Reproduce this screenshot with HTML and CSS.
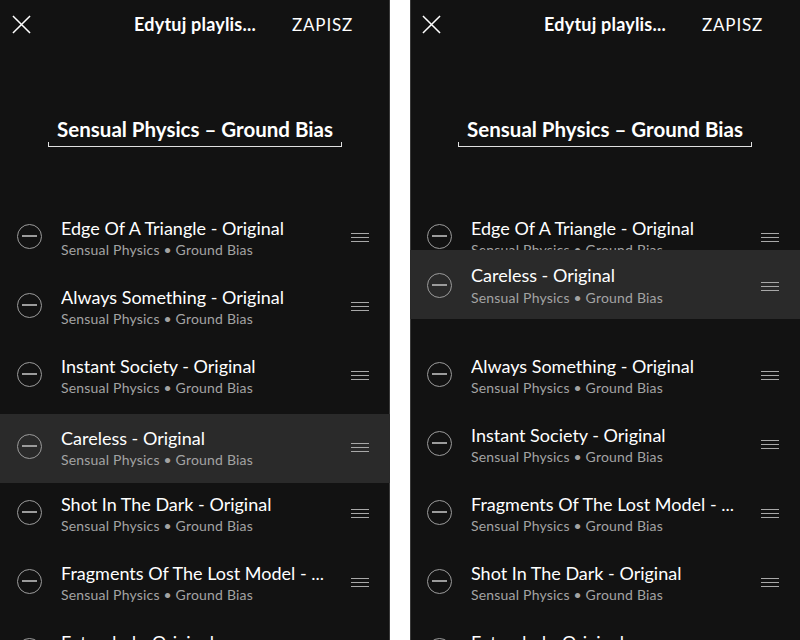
FILE: index.html
```html
<!DOCTYPE html>
<html lang="pl">
<head>
<meta charset="utf-8">
<title>Edytuj playlistę</title>
<link rel="stylesheet" href="styles.css">
</head>
<body>
<div class="screens">
  <section class="phone">
    <header class="bar">
      <span class="close"><svg viewBox="0 0 20 20" width="20" height="20"><path d="M1 1 L19 19 M19 1 L1 19" stroke="#fff" stroke-width="1.6" fill="none"/></svg></span>
      <span class="bar-title">Edytuj playlis...</span>
      <span class="save">ZAPISZ</span>
    </header>
    <div class="name">
      <div class="name-text">Sensual Physics – Ground Bias</div>
      <div class="name-line"></div>
    </div>
    <ul class="tracks">
      <li class="track"><span class="minus"></span><div class="info"><div class="t">Edge Of A Triangle - Original</div><div class="a">Sensual Physics • Ground Bias</div></div><span class="handle"></span></li>
      <li class="track"><span class="minus"></span><div class="info"><div class="t">Always Something - Original</div><div class="a">Sensual Physics • Ground Bias</div></div><span class="handle"></span></li>
      <li class="track"><span class="minus"></span><div class="info"><div class="t">Instant Society - Original</div><div class="a">Sensual Physics • Ground Bias</div></div><span class="handle"></span></li>
      <li class="track dragging"><span class="minus"></span><div class="info"><div class="t">Careless - Original</div><div class="a">Sensual Physics • Ground Bias</div></div><span class="handle"></span></li>
      <li class="track"><span class="minus"></span><div class="info"><div class="t">Shot In The Dark - Original</div><div class="a">Sensual Physics • Ground Bias</div></div><span class="handle"></span></li>
      <li class="track"><span class="minus"></span><div class="info"><div class="t">Fragments Of The Lost Model - ...</div><div class="a">Sensual Physics • Ground Bias</div></div><span class="handle"></span></li>
      <li class="track"><span class="minus"></span><div class="info"><div class="t">Extended - Original</div><div class="a">Sensual Physics • Ground Bias</div></div><span class="handle"></span></li>
    </ul>
  </section>

  <section class="phone">
    <header class="bar">
      <span class="close"><svg viewBox="0 0 20 20" width="20" height="20"><path d="M1 1 L19 19 M19 1 L1 19" stroke="#fff" stroke-width="1.6" fill="none"/></svg></span>
      <span class="bar-title">Edytuj playlis...</span>
      <span class="save">ZAPISZ</span>
    </header>
    <div class="name">
      <div class="name-text">Sensual Physics – Ground Bias</div>
      <div class="name-line"></div>
    </div>
    <ul class="tracks">
      <li class="track"><span class="minus"></span><div class="info"><div class="t">Edge Of A Triangle - Original</div><div class="a">Sensual Physics • Ground Bias</div></div><span class="handle"></span></li>
      <li class="slot"></li>
      <li class="track"><span class="minus"></span><div class="info"><div class="t">Always Something - Original</div><div class="a">Sensual Physics • Ground Bias</div></div><span class="handle"></span></li>
      <li class="track"><span class="minus"></span><div class="info"><div class="t">Instant Society - Original</div><div class="a">Sensual Physics • Ground Bias</div></div><span class="handle"></span></li>
      <li class="track"><span class="minus"></span><div class="info"><div class="t">Fragments Of The Lost Model - ...</div><div class="a">Sensual Physics • Ground Bias</div></div><span class="handle"></span></li>
      <li class="track"><span class="minus"></span><div class="info"><div class="t">Shot In The Dark - Original</div><div class="a">Sensual Physics • Ground Bias</div></div><span class="handle"></span></li>
      <li class="track"><span class="minus"></span><div class="info"><div class="t">Extended - Original</div><div class="a">Sensual Physics • Ground Bias</div></div><span class="handle"></span></li>
    </ul>
    <div class="track floating"><span class="minus"></span><div class="info"><div class="t">Careless - Original</div><div class="a">Sensual Physics • Ground Bias</div></div><span class="handle"></span></div>
  </section>
</div>
</body>
</html>
```

FILE: styles.css
```css
* { box-sizing: border-box; }
html, body { margin: 0; padding: 0; background: #fff; }
body { font-family: "Lato", "Noto Sans", sans-serif; color: #fff; }

.screens {
  display: flex;
  gap: 20px;
  width: 800px;
  height: 640px;
  overflow: hidden;
}

.phone {
  position: relative;
  width: 390px;
  height: 640px;
  overflow: hidden;
  background: #121212;
}
.phone:first-child { box-shadow: inset -1px 0 #3a3a3a; }
.phone:last-child { box-shadow: inset 1px 0 #3a3a3a; }

.bar {
  display: grid;
  grid-template-columns: 1fr auto 1fr;
  align-items: center;
  height: 48px;
}
.close {
  display: flex;
  padding-left: 12px;
  padding-top: 1px;
}
.close svg { display: block; width: 19px; height: 19px; }
.bar-title {
  font-weight: 700;
  font-size: 18px;
  letter-spacing: 0.2px;
}
.save {
  justify-self: end;
  padding-right: 37px;
  font-size: 17px;
  letter-spacing: 0.8px;
}

.name {
  display: flex;
  flex-direction: column;
  align-items: center;
  padding-top: 69px;
}
.name-text {
  font-weight: 700;
  font-size: 20.5px;
  line-height: 25px;
  padding: 0 9px;
}
.name-line {
  width: 294px;
  height: 5px;
  margin-top: 0;
  border: 1.5px solid #e0e0e0;
  border-top: none;
}

.tracks {
  list-style: none;
  margin: 57px 0 0;
  padding: 0;
}
.slot { height: 69px; }

.track {
  display: flex;
  align-items: flex-start;
  height: 69px;
  padding: 0 21px 0 17px;
}
.track.dragging {
  position: relative;
  top: 3px;
  z-index: 1;
  background: #2a2a2a;
}
.track.floating {
  position: absolute;
  left: 0;
  right: 0;
  top: 250px;
  background: #2a2a2a;
}
.track.floating .info { padding-top: 14px; }
.track.floating .a { margin-top: 1px; }
.track.floating .minus { margin-top: 23px; }
.track.floating .handle { margin-top: 32px; }

.minus {
  position: relative;
  flex: none;
  width: 25px;
  height: 25px;
  margin-top: 20px;
  margin-right: 19px;
  border: 1.5px solid #9b9b9b;
  border-radius: 50%;
}
.minus::after {
  content: "";
  position: absolute;
  left: 4px;
  right: 4px;
  top: 10px;
  height: 1.5px;
  background: #9b9b9b;
}

.info {
  flex: 1;
  min-width: 0;
  padding-top: 13px;
  margin-right: 20px;
}
.t {
  font-size: 18px;
  line-height: 23px;
  white-space: nowrap;
  overflow: hidden;
}
.a {
  margin-top: 0;
  font-size: 14px;
  line-height: 20px;
  color: #a3a3a3;
  white-space: nowrap;
  letter-spacing: 0.2px;
}

.handle {
  flex: none;
  width: 18px;
  height: 9px;
  margin-top: 29px;
  border-top: 1.5px solid #a8a8a8;
  border-bottom: 1.5px solid #a8a8a8;
  position: relative;
}
.handle::after {
  content: "";
  position: absolute;
  left: 0;
  right: 0;
  top: 2.5px;
  height: 1.5px;
  background: #a8a8a8;
}
```
